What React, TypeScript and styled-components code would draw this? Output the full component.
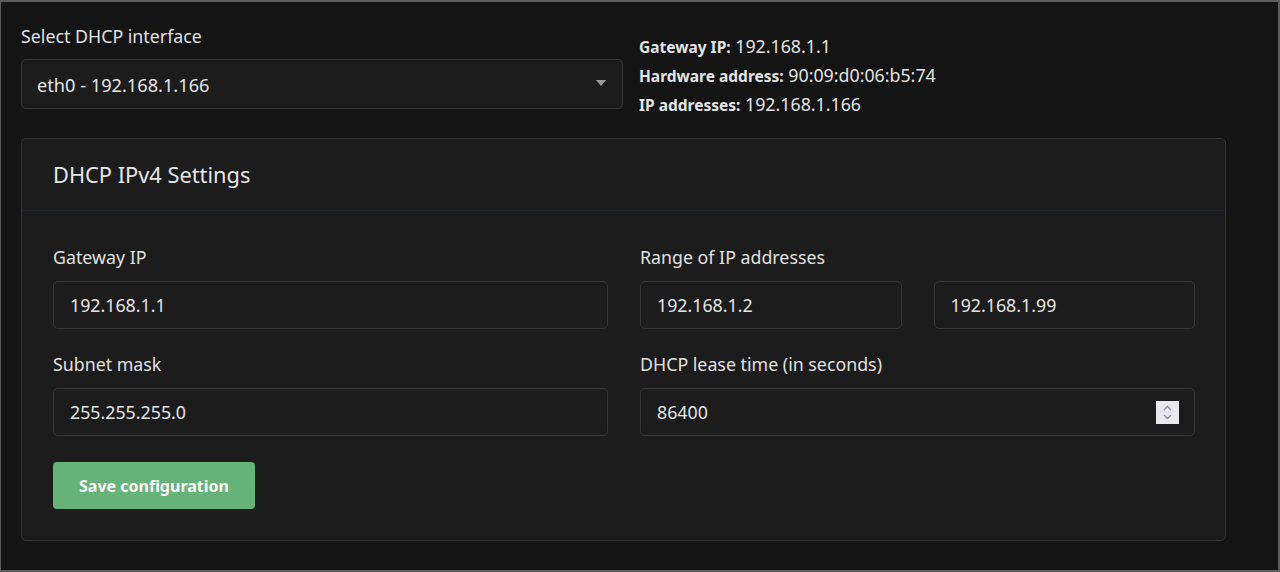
import styled, { createGlobalStyle } from "styled-components"

const GlobalStyle = createGlobalStyle`
  html, body {
    margin: 0;
    padding: 0;
    background: #141414;
  }
  * {
    box-sizing: border-box;
  }
`

const Frame = styled.div`
  width: 1280px;
  height: 572px;
  border: 1px solid #5c5c5c;
  border-width: 2px 2px 2px 1px;
  background: #141414;
  color: #e2e2e2;
  font-family: "Noto Sans", "Open Sans", sans-serif;
  font-size: 16px;
  padding: 22px 0 0 20px;
  overflow: hidden;
`

const TopRow = styled.div`
  display: flex;
  gap: 16px;
  width: 1220px;
`

const SelectGroup = styled.div`
  width: 602px;
  display: flex;
  flex-direction: column;
  gap: 11px;
`

const Label = styled.div`
  font-size: 17.8px;
  line-height: 24px;
  color: #e0e0e0;
`

const SelectBox = styled.div`
  height: 50px;
  border: 1px solid #363636;
  border-radius: 5px;
  background: #1c1c1c;
  display: flex;
  align-items: center;
  justify-content: space-between;
  padding: 2px 16px 0 15px;
  font-size: 18.2px;
  color: #e4e4e4;
`

const Caret = styled.svg`
  width: 10px;
  height: 6px;
  margin-top: -5px;
`

const InfoList = styled.div`
  padding-top: 8px;
  display: flex;
  flex-direction: column;
`

const InfoLine = styled.div`
  height: 29px;
  line-height: 29px;
  font-size: 17.8px;
  color: #e4e4e4;
  white-space: nowrap;
  b {
    font-weight: 700;
    font-size: 15.5px;
    line-height: 1;
  }
`

const Card = styled.div`
  margin-top: 19px;
  width: 1205px;
  border: 1px solid #343434;
  border-radius: 5px;
  background: #1c1c1c;
`

const CardHeader = styled.div`
  height: 72px;
  padding: 21px 31px 0;
  border-bottom: 1px solid #202330;
  font-size: 21.8px;
  line-height: 30px;
  color: #e6e6e6;
`

const CardBody = styled.div`
  padding: 34px 30px 31px 31px;
  display: flex;
  flex-direction: column;
  gap: 26px;
`

const Grid = styled.div`
  display: grid;
  grid-template-columns: 1fr 1fr;
  column-gap: 32px;
  row-gap: 23px;
`

const Field = styled.div`
  display: flex;
  flex-direction: column;
  gap: 12px;
`

const Pair = styled.div`
  display: grid;
  grid-template-columns: 1fr 1fr;
  gap: 32px;
`

const InputWrap = styled.div`
  position: relative;
`

const Input = styled.input`
  width: 100%;
  height: 48px;
  border: 1px solid #363636;
  border-radius: 5px;
  background: #1c1c1c;
  color: #e4e4e4;
  font-family: inherit;
  font-size: 17.8px;
  padding: 0 16px;
  outline: none;
`

const Spinner = styled.div`
  position: absolute;
  right: 16px;
  top: 13px;
  width: 23px;
  height: 23px;
  background: #e9e8ef;
  display: flex;
  align-items: center;
  justify-content: center;
`

const Button = styled.button`
  align-self: flex-start;
  height: 47px;
  padding: 0 26px;
  border: none;
  border-radius: 4px;
  background: #66b37a;
  color: #fbfbfb;
  font-family: inherit;
  font-size: 16px;
  font-weight: 700;
`

const App = () => {
  return (
    <>
      <GlobalStyle />
      <Frame>
        <TopRow>
          <SelectGroup>
            <Label>Select DHCP interface</Label>
            <SelectBox>
              <span>eth0 - 192.168.1.166</span>
              <Caret viewBox="0 0 10 6">
                <path d="M0 0 L10 0 L5 6 Z" fill="#9a9a9a" />
              </Caret>
            </SelectBox>
          </SelectGroup>
          <InfoList>
            <InfoLine><b>Gateway IP:</b> 192.168.1.1</InfoLine>
            <InfoLine><b>Hardware address:</b> 90:09:d0:06:b5:74</InfoLine>
            <InfoLine><b>IP addresses:</b> 192.168.1.166</InfoLine>
          </InfoList>
        </TopRow>
        <Card>
          <CardHeader>DHCP IPv4 Settings</CardHeader>
          <CardBody>
            <Grid>
              <Field>
                <Label>Gateway IP</Label>
                <Input defaultValue="192.168.1.1" />
              </Field>
              <Field>
                <Label>Range of IP addresses</Label>
                <Pair>
                  <Input defaultValue="192.168.1.2" />
                  <Input defaultValue="192.168.1.99" />
                </Pair>
              </Field>
              <Field>
                <Label>Subnet mask</Label>
                <Input defaultValue="255.255.255.0" />
              </Field>
              <Field>
                <Label>DHCP lease time (in seconds)</Label>
                <InputWrap>
                  <Input defaultValue="86400" />
                  <Spinner>
                    <svg width="11" height="17" viewBox="0 0 11 17">
                      <path d="M2 6 L5.5 2.5 L9 6" stroke="#8e8e98" strokeWidth="1.4" fill="none" />
                      <path d="M2 11 L5.5 14.5 L9 11" stroke="#8e8e98" strokeWidth="1.4" fill="none" />
                    </svg>
                  </Spinner>
                </InputWrap>
              </Field>
            </Grid>
            <Button>Save configuration</Button>
          </CardBody>
        </Card>
      </Frame>
    </>
  )
}

export default App
